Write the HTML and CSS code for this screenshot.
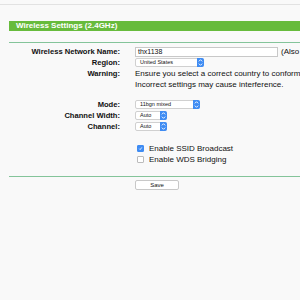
FILE: index.html
```html
<!DOCTYPE html>
<html lang="en">
<head>
    <meta charset="UTF-8">
    <title>Wireless Settings</title>
    <link rel="stylesheet" href="styles.css">
</head>
<body>
    <div class="page">
        <div class="topline"></div>

        <h1 class="title">Wireless Settings (2.4GHz)</h1>

        <div class="form">
            <div class="row">
                <label class="label">Wireless Network Name:</label>
                <div class="field">
                    <span class="input">thx1138</span>
                    <span class="hint">(Also called the SSID)</span>
                </div>
            </div>
            <div class="row">
                <label class="label">Region:</label>
                <div class="field">
                    <span class="select w-region">United States<span class="arrow"><svg viewBox="0 0 6 8"><path d="M1.5 3L3 1.5 4.5 3M1.5 5L3 6.5 4.5 5"/></svg></span></span>
                </div>
            </div>
            <div class="row">
                <label class="label">Warning:</label>
                <div class="field text">Ensure you select a correct country to conform local law.<br>Incorrect settings may cause interference.</div>
            </div>

            <div class="spacer"></div>

            <div class="row">
                <label class="label">Mode:</label>
                <div class="field">
                    <span class="select w-mode">11bgn mixed<span class="arrow"><svg viewBox="0 0 6 8"><path d="M1.5 3L3 1.5 4.5 3M1.5 5L3 6.5 4.5 5"/></svg></span></span>
                </div>
            </div>
            <div class="row">
                <label class="label">Channel Width:</label>
                <div class="field">
                    <span class="select w-small">Auto<span class="arrow"><svg viewBox="0 0 6 8"><path d="M1.5 3L3 1.5 4.5 3M1.5 5L3 6.5 4.5 5"/></svg></span></span>
                </div>
            </div>
            <div class="row">
                <label class="label">Channel:</label>
                <div class="field">
                    <span class="select w-small">Auto<span class="arrow"><svg viewBox="0 0 6 8"><path d="M1.5 3L3 1.5 4.5 3M1.5 5L3 6.5 4.5 5"/></svg></span></span>
                </div>
            </div>

            <div class="spacer wide"></div>

            <div class="row">
                <span class="label"></span>
                <div class="field check">
                    <span class="box checked"><svg viewBox="0 0 6 6"><path d="M1.5 3.2L2.6 4.3 4.6 1.7"/></svg></span>
                    Enable SSID Broadcast
                </div>
            </div>
            <div class="row">
                <span class="label"></span>
                <div class="field check">
                    <span class="box"></span>
                    Enable WDS Bridging
                </div>
            </div>
        </div>

        <div class="footer">
            <span class="button">Save</span>
        </div>
    </div>
</body>
</html>
```

FILE: styles.css
```css
:root {
    --green: #67bb3c;
    --line: #84c49a;
    --blue: #3f8cf3;
    --text: #111;
    --bg: #f9f9f9;
}

body {
    margin: 0;
    background: var(--bg);
    font-family: "Liberation Sans", Arial, sans-serif;
    color: var(--text);
    overflow: hidden;
}

.page {
    width: 520px;
    padding-left: 9px;
}

.topline {
    height: 4px;
    border-bottom: 1px solid #e2e2e2;
    margin-left: -9px;
}

/* green header bar */
.title {
    margin: 16px 0 0;
    height: 10px;
    line-height: 10px;
    background: var(--green);
    color: #fff;
    font-size: 8px;
    font-weight: 700;
    padding-left: 7px;
}

.form {
    margin-top: 11px;
    border-top: 1px solid var(--line);
    padding-top: 3px;
    padding-bottom: 11px;
    border-bottom: 1px solid var(--line);
}

.row {
    display: grid;
    grid-template-columns: 111px 1fr;
    column-gap: 15px;
    line-height: 11px;
    font-size: 8px;
}

.label {
    text-align: right;
    font-weight: 700;
    font-size: 7.6px;
}

.field {
    display: flex;
    align-items: center;
    gap: 3px;
    min-height: 11px;
}

.field.text {
    display: block;
    white-space: nowrap;
}

.spacer { height: 9px; }
.spacer.wide { height: 11px; }

.input {
    width: 139px;
    height: 8px;
    line-height: 8px;
    background: #fff;
    border: 1px solid #c8c8c8;
    padding-left: 2px;
    font-size: 7px;
}

.hint { white-space: nowrap; }

/* mac style popups */
.select {
    position: relative;
    height: 7px;
    line-height: 7px;
    background: #fff;
    border: 1px solid #d0d0d0;
    border-radius: 2px;
    font-size: 5.5px;
    padding-left: 4px;
}

.w-region { width: 63px; }
.w-mode { width: 59px; }
.w-small { width: 26px; }

.arrow {
    position: absolute;
    top: -1px;
    right: -1px;
    width: 7px;
    height: 9px;
    background: var(--blue);
    border-radius: 0 2px 2px 0;
}

.arrow svg {
    width: 7px;
    height: 9px;
    fill: none;
    stroke: #fff;
    stroke-width: 0.8;
}

.check { gap: 5px; }

.box {
    width: 5px;
    height: 5px;
    background: #fff;
    border: 1px solid #bbb;
    border-radius: 1px;
    margin-left: 2px;
}

.box.checked {
    background: var(--blue);
    border-color: var(--blue);
}

.box svg {
    display: block;
    width: 5px;
    height: 5px;
    fill: none;
    stroke: #fff;
    stroke-width: 1;
}

.footer {
    padding: 3px 0 0 126px;
}

.button {
    display: block;
    width: 42px;
    height: 8px;
    line-height: 8px;
    background: #fff;
    border: 1px solid #c8c8c8;
    border-radius: 2px;
    font-size: 6px;
    text-align: center;
}
```
